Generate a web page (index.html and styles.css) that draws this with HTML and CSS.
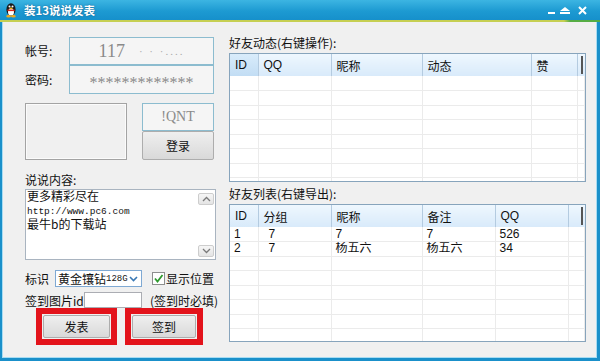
FILE: index.html
```html
<!DOCTYPE html>
<html lang="zh-CN">
<head>
  <meta charset="UTF-8" />
  <title>装13说说发表</title>
  <link rel="stylesheet" href="styles.css">
</head>
<body>

  <div class="window">
    <div class="titlebar">
      <svg class="logo" width="12" height="16" viewBox="0 0 12 16">
        <ellipse cx="6" cy="7.5" rx="4.6" ry="6.3" fill="#1a1a1a"/>
        <ellipse cx="6" cy="10" rx="3" ry="3.6" fill="#fff"/>
        <circle cx="4.5" cy="4.6" r="1" fill="#fff"/>
        <circle cx="7.5" cy="4.6" r="1" fill="#fff"/>
        <ellipse cx="6" cy="6.4" rx="1.6" ry="0.8" fill="#f2b81c"/>
        <rect x="2.4" y="7.6" width="7.2" height="1.5" fill="#d9261c"/>
        <ellipse cx="3.6" cy="14.3" rx="2.4" ry="1.2" fill="#f2a91c"/>
        <ellipse cx="8.4" cy="14.3" rx="2.4" ry="1.2" fill="#f2a91c"/>
      </svg>
      <span class="title">装13说说发表</span>
      <svg class="controls" width="40" height="12" viewBox="0 0 40 12">
        <rect x="0" y="8" width="7" height="2" fill="#fff"/>
        <polygon points="17,3 22,7 12,7" fill="#fff"/>
        <rect x="12" y="8" width="10" height="2" fill="#fff"/>
        <path d="M31 3 L38 10 M38 3 L31 10" stroke="#fff" stroke-width="2"/>
      </svg>
    </div>
    <div class="accent"></div>

    <div class="frame">
      <div class="client">

        <!-- left: login + post -->
        <div class="left">
          <div class="login">
            <span class="lbl">帐号:</span>
            <div class="field big">117<span class="dots">· · ·....</span></div>
            <span class="lbl">密码:</span>
            <div class="field pwd">*************</div>
          </div>

          <div class="verify">
            <div class="pic"></div>
            <div class="vcol">
              <div class="field code">!QNT</div>
              <button class="btn login-btn">登录</button>
            </div>
          </div>

          <div class="lbl memo-lbl">说说内容:</div>
          <div class="memo">
            <div class="memo-text">更多精彩尽在<br><span class="mono">http://www.pc6.com</span><br>最牛b的下载站</div>
            <div class="vscroll">
              <span class="sbtn">
                <svg width="9" height="6" viewBox="0 0 9 6"><polyline points="1,5 4.5,1.5 8,5" fill="none" stroke="#7a7a7a" stroke-width="1.3"/></svg>
              </span>
              <span class="sbtn">
                <svg width="9" height="6" viewBox="0 0 9 6"><polyline points="1,1 4.5,4.5 8,1" fill="none" stroke="#7a7a7a" stroke-width="1.3"/></svg>
              </span>
            </div>
          </div>

          <div class="opt opt-first">
            <span class="opt-lbl">标识</span>
            <div class="select">
              <span>黄金镶钻</span><span class="sel-num">128G</span>
              <svg class="caret" width="9" height="6" viewBox="0 0 9 6"><polyline points="1,1 4.5,4.5 8,1" fill="none" stroke="#3a78b4" stroke-width="1.6"/></svg>
            </div>
            <label class="check">
              <span class="box">
                <svg width="11" height="11" viewBox="0 0 11 11"><polyline points="2,5.5 4.5,8.5 9.5,2" fill="none" stroke="#2e9a2e" stroke-width="1.8"/></svg>
              </span>
              显示位置
            </label>
          </div>

          <div class="opt opt-second">
            <span class="id-lbl">签到图片id</span>
            <div class="small-input"></div>
            <span class="note">(签到时必填)</span>
          </div>

          <div class="actions">
            <div class="mark mark-post"><button class="btn">发表</button></div>
            <div class="mark mark-sign"><button class="btn">签到</button></div>
          </div>
        </div>

        <!-- right: friend lists -->
        <div class="right">
          <div class="lbl">好友动态(右键操作):</div>
          <div class="grid-box feed">
            <table class="grid">
              <colgroup>
                <col style="width:28px"><col style="width:73px"><col style="width:91px"><col style="width:109px"><col style="width:46px"><col>
              </colgroup>
              <thead>
                <tr><th class="sorted">ID</th><th>QQ</th><th>昵称</th><th>动态</th><th>赞</th><th class="last"><span class="bar"></span></th></tr>
              </thead>
              <tbody>
                <tr><td></td><td></td><td></td><td></td><td></td><td></td></tr>
                <tr><td></td><td></td><td></td><td></td><td></td><td></td></tr>
                <tr><td></td><td></td><td></td><td></td><td></td><td></td></tr>
                <tr><td></td><td></td><td></td><td></td><td></td><td></td></tr>
                <tr><td></td><td></td><td></td><td></td><td></td><td></td></tr>
                <tr><td></td><td></td><td></td><td></td><td></td><td></td></tr>
                <tr><td></td><td></td><td></td><td></td><td></td><td></td></tr>
                <tr><td></td><td></td><td></td><td></td><td></td><td></td></tr>
              </tbody>
            </table>
          </div>

          <div class="lbl list-lbl">好友列表(右键导出):</div>
          <div class="grid-box friends">
            <table class="grid">
              <colgroup>
                <col style="width:28px"><col style="width:73px"><col style="width:91px"><col style="width:73px"><col style="width:73px"><col>
              </colgroup>
              <thead>
                <tr><th>ID</th><th>分组</th><th>昵称</th><th>备注</th><th>QQ</th><th class="last"><span class="bar"></span></th></tr>
              </thead>
              <tbody>
                <tr><td>1</td><td class="grp">7</td><td>7</td><td>7</td><td>526</td><td></td></tr>
                <tr><td>2</td><td class="grp">7</td><td>杨五六</td><td>杨五六</td><td>34</td><td></td></tr>
                <tr><td></td><td></td><td></td><td></td><td></td><td></td></tr>
                <tr><td></td><td></td><td></td><td></td><td></td><td></td></tr>
                <tr><td></td><td></td><td></td><td></td><td></td><td></td></tr>
                <tr><td></td><td></td><td></td><td></td><td></td><td></td></tr>
                <tr><td></td><td></td><td></td><td></td><td></td><td></td></tr>
                <tr><td></td><td></td><td></td><td></td><td></td><td></td></tr>
              </tbody>
            </table>
          </div>
        </div>

      </div>
    </div>
  </div>

</body>
</html>
```

FILE: styles.css
```css
* {
  box-sizing: border-box;
}

body {
  margin: 0;
  font-family: "Noto Sans CJK SC", sans-serif;
  font-size: 12px;
  color: #111;
}

.window {
  width: 600px;
  height: 361px;
  display: flex;
  flex-direction: column;
  background-color: #1a90ca;
}

.titlebar {
  height: 20px;
  display: flex;
  align-items: center;
  padding: 0 12px 0 5px;
  background: linear-gradient(#3cb5e2, #1d9ad2 55%, #1690cb);
  color: white;
}

.logo {
  flex: none;
}

.title {
  margin-left: 7px;
  font-size: 11.5px;
  font-weight: bold;
  text-shadow: 0 0 2px rgba(0, 50, 90, 0.6);
}

.controls {
  margin-left: auto;
}

.accent {
  height: 2px;
  background: linear-gradient(90deg, #c6cf52 94%, #56ad45 95%);
}

.frame {
  flex: 1;
  display: flex;
  padding: 0 3px 3px 2px;
}

.client {
  flex: 1;
  display: flex;
  background-color: #f0f0f0;
  border: 1px solid #a8dcf2;
  border-top: none;
}

/* left column */
.left {
  width: 219px;
  padding: 15px 0 0 22px;
}

.lbl {
  line-height: 16px;
}

.login {
  display: grid;
  grid-template-columns: 44px 145px;
  grid-template-rows: 28px 29px;
  align-items: center;
}

.field {
  height: 100%;
  display: flex;
  align-items: center;
  justify-content: center;
  border: 1px solid #8cbccf;
  background-color: #f5f5f5;
  color: #8a8a8a;
  font-family: "Liberation Serif", serif;
}

.big {
  font-size: 18px;
}

.dots {
  margin-left: 14px;
  font-size: 11px;
  letter-spacing: 2px;
  color: #aaa;
}

.pwd {
  font-size: 16px;
  padding-top: 6px;
}

.verify {
  display: flex;
  gap: 15px;
  margin-top: 9px;
}

.pic {
  width: 102px;
  height: 57px;
  border: 1px solid #a3a3a3;
  box-shadow: inset 0 0 0 1px #fbfbfb;
}

.vcol {
  width: 72px;
  display: flex;
  flex-direction: column;
}

.code {
  height: 28px;
  font-size: 14px;
}

.btn {
  font-family: "Noto Sans CJK SC", sans-serif;
  font-size: 12px;
  color: #111;
  border: 1px solid #adadad;
  border-radius: 2px;
  background: linear-gradient(#efefef, #d9d9d9);
  padding: 0;
}

.login-btn {
  height: 29px;
}

.memo-lbl {
  margin-top: 12px;
}

.memo {
  width: 191px;
  height: 71px;
  margin-top: 1px;
  display: flex;
  border: 1px solid #a9b4c0;
  background-color: white;
}

.memo-text {
  flex: 1;
  padding: 0 0 0 1px;
  line-height: 12.5px;
  white-space: nowrap;
}

.mono {
  font-family: "Liberation Mono", monospace;
  font-size: 9.5px;
}

.vscroll {
  width: 17px;
  display: flex;
  flex-direction: column;
  justify-content: space-between;
  padding: 3px 1px 2px 0;
}

.sbtn {
  height: 12px;
  display: flex;
  align-items: center;
  justify-content: center;
  border: 1px solid #cdcdcd;
  border-radius: 2px;
  background: linear-gradient(#f6f6f6, #e4e4e4);
}

.opt {
  display: flex;
  align-items: center;
}

.opt-first {
  height: 17px;
  margin-top: 10px;
}

.opt-lbl {
  width: 30px;
}

.select {
  width: 87px;
  height: 17px;
  display: flex;
  align-items: center;
  padding-left: 2px;
  border: 1px solid #7fa9d3;
  background-color: white;
  white-space: nowrap;
  overflow: hidden;
}

.sel-num {
  font-family: "Liberation Mono", monospace;
  font-size: 9px;
}

.caret {
  margin-left: auto;
  margin-right: 3px;
  flex: none;
}

.check {
  display: flex;
  align-items: center;
  gap: 1px;
  margin-left: 10px;
}

.box {
  width: 13px;
  height: 13px;
  display: flex;
  align-items: center;
  justify-content: center;
  border: 1px solid #8e8f8f;
  background-color: white;
}

.opt-second {
  height: 16px;
  margin-top: 5px;
}

.id-lbl {
  width: 59px;
}

.small-input {
  width: 58px;
  height: 16px;
  border: 1px solid #abadb3;
  background-color: white;
}

.note {
  margin-left: 8px;
}

.actions {
  display: flex;
  gap: 8px;
  padding-left: 11px;
}

.mark {
  height: 37px;
  display: flex;
  padding: 1px;
  border: 6px solid #e3131b;
}

.mark .btn {
  flex: 1;
}

.mark-post {
  width: 81px;
}

.mark-sign {
  width: 78px;
}

/* right column */
.right {
  flex: 1;
  padding: 13px 10px 0 7px;
}

.grid-box {
  margin-top: 2px;
  border: 1px solid #87a4bc;
  background-color: white;
  overflow: hidden;
}

.feed {
  height: 129px;
}

.friends {
  height: 138px;
}

.list-lbl {
  margin-top: 4px;
}

.grid {
  width: 100%;
  border-collapse: collapse;
  table-layout: fixed;
  font-family: "Liberation Sans", "Noto Sans CJK SC", sans-serif;
  font-size: 12px;
}

.grid th {
  height: 22px;
  padding: 0 0 0 5px;
  text-align: left;
  font-weight: normal;
  background: linear-gradient(#eef7fe, #d8eafa);
  border-right: 1px solid #b4cbe0;
  white-space: nowrap;
}

.grid th.sorted {
  background: linear-gradient(#d9ecfb, #c2ddf4);
}

.grid th.last {
  padding: 0;
  border-right: none;
}

.bar {
  display: block;
  width: 2px;
  height: 18px;
  margin-left: auto;
  margin-right: 2px;
  background-color: #555;
}

.grid td {
  height: 14.5px;
  padding: 0 0 0 4px;
  line-height: 13px;
  border-right: 1px solid #ebebeb;
  border-bottom: 1px solid #ebebeb;
  white-space: nowrap;
  overflow: hidden;
}

.grid td.grp {
  padding-left: 10px;
}
```
